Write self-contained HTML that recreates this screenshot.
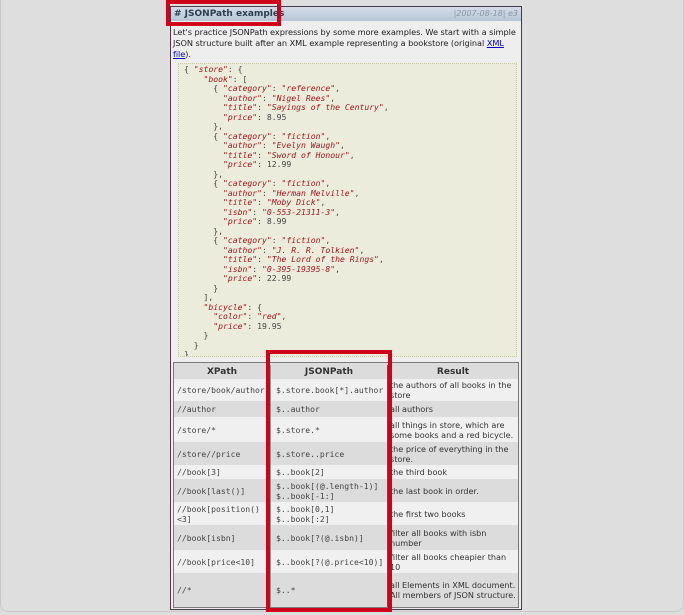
<!DOCTYPE html>
<html><head><meta charset="utf-8"><style>
*{margin:0;padding:0;box-sizing:border-box}
body{width:684px;height:615px;background:#dedede;position:relative;overflow:hidden;font-family:"DejaVu Sans","Liberation Sans",sans-serif;}
.frame{position:absolute;left:0;top:0;width:684px;height:612px;border:1px solid #c8c8c8;border-top:none;border-radius:0 0 8px 8px;background:#dedede}
.panel{position:absolute;left:170px;top:6px;width:352px;height:604px;background:#eeeeee;border:1px solid #4a3a4a;}
.hdr{position:absolute;left:0;top:0;width:350px;height:14px;background:linear-gradient(#d4dde8,#b6c6d6);font-size:9px;font-weight:bold;color:#2c3e50;line-height:14px;padding-left:3px}
.hdr span{position:absolute;right:3px;top:0;font-weight:normal;font-style:italic;color:#8a97a4;font-size:8px}
.p{position:absolute;left:2px;top:20px;width:348px;font-size:8.2px;line-height:11px;color:#222;letter-spacing:-0.05px}
.p a{color:#00c;text-decoration:underline}
.code{position:absolute;left:7px;top:56px;width:339px;height:294px;background:#ececdc;border:1px dotted #c8c8a8;font-family:"DejaVu Sans Mono","Liberation Mono",monospace;font-size:8.1px;line-height:9.5px;color:#444;padding:1px 0 0 5px;white-space:pre;overflow:hidden}
.k{color:#a3161b;font-style:italic}.s{color:#a3161b;font-style:italic}
.t{position:absolute;left:2px;top:355px;width:346px;height:246px;border:1px solid #7a7a7a;background:#dcdcdc}
.r{position:absolute;left:0;width:344px;}
.c{position:absolute;top:0;height:100%;display:flex;align-items:center;font-size:8.1px;line-height:10px;color:#333}
.m{font-family:"DejaVu Sans Mono","Liberation Mono",monospace;font-size:8.1px;color:#444}
.c1{left:0;width:97px;padding-left:3px;border-right:1px solid #999;white-space:nowrap;overflow:hidden}
.c2{left:97px;width:117px;padding-left:5px;border-right:1px solid #555;white-space:nowrap;overflow:hidden}
.c3{left:214px;width:130px;padding-left:2px;padding-right:0}
.h .c{justify-content:center;font-weight:bold;padding:0;font-size:9px}
.red{position:absolute;border:4px solid #d0021b}
</style></head><body>
<div class="frame"></div>
<div class="panel">
<div class="hdr"># JSONPath examples<span>|2007-08-18| e3</span></div>
<div class="p">Let's practice JSONPath expressions by some more examples. We start with a simple JSON structure built after an XML example representing a bookstore (original <a>XML file</a>).</div>
<div class="code">{ <span class="k">"store"</span>: {
    <span class="k">"book"</span>: [ 
      { <span class="k">"category"</span>: <span class="s">"reference"</span>,
        <span class="k">"author"</span>: <span class="s">"Nigel Rees"</span>,
        <span class="k">"title"</span>: <span class="s">"Sayings of the Century"</span>,
        <span class="k">"price"</span>: 8.95
      },
      { <span class="k">"category"</span>: <span class="s">"fiction"</span>,
        <span class="k">"author"</span>: <span class="s">"Evelyn Waugh"</span>,
        <span class="k">"title"</span>: <span class="s">"Sword of Honour"</span>,
        <span class="k">"price"</span>: 12.99
      },
      { <span class="k">"category"</span>: <span class="s">"fiction"</span>,
        <span class="k">"author"</span>: <span class="s">"Herman Melville"</span>,
        <span class="k">"title"</span>: <span class="s">"Moby Dick"</span>,
        <span class="k">"isbn"</span>: <span class="s">"0-553-21311-3"</span>,
        <span class="k">"price"</span>: 8.99
      },
      { <span class="k">"category"</span>: <span class="s">"fiction"</span>,
        <span class="k">"author"</span>: <span class="s">"J. R. R. Tolkien"</span>,
        <span class="k">"title"</span>: <span class="s">"The Lord of the Rings"</span>,
        <span class="k">"isbn"</span>: <span class="s">"0-395-19395-8"</span>,
        <span class="k">"price"</span>: 22.99
      }
    ],
    <span class="k">"bicycle"</span>: {
      <span class="k">"color"</span>: <span class="s">"red"</span>,
      <span class="k">"price"</span>: 19.95
    }
  }
}</div>
<div class="t">
<div class="r h" style="top:2px;height:14px;background:#dcdcdc"><div class="c c1">XPath</div><div class="c c2">JSONPath</div><div class="c c3">Result</div></div>
<div class="r" style="top:16px;height:22px;background:#f0f0f0"><div class="c c1 m">/store/book/author</div><div class="c c2 m">$.store.book[*].author</div><div class="c c3">the authors of all books in the store</div></div>
<div class="r" style="top:38px;height:16px;background:#dcdcdc"><div class="c c1 m">//author</div><div class="c c2 m">$..author</div><div class="c c3">all authors</div></div>
<div class="r" style="top:54px;height:25px;background:#f0f0f0"><div class="c c1 m">/store/*</div><div class="c c2 m">$.store.*</div><div class="c c3">all things in store, which are some books and a red bicycle.</div></div>
<div class="r" style="top:79px;height:23px;background:#dcdcdc"><div class="c c1 m">/store//price</div><div class="c c2 m">$.store..price</div><div class="c c3">the price of everything in the store.</div></div>
<div class="r" style="top:102px;height:14px;background:#f0f0f0"><div class="c c1 m">//book[3]</div><div class="c c2 m">$..book[2]</div><div class="c c3">the third book</div></div>
<div class="r" style="top:116px;height:23px;background:#dcdcdc"><div class="c c1 m">//book[last()]</div><div class="c c2 m">$..book[(@.length-1)]<br>$..book[-1:]</div><div class="c c3">the last book in order.</div></div>
<div class="r" style="top:139px;height:23px;background:#f0f0f0"><div class="c c1 m">//book[position()<br>&lt;3]</div><div class="c c2 m">$..book[0,1]<br>$..book[:2]</div><div class="c c3">the first two books</div></div>
<div class="r" style="top:162px;height:25px;background:#dcdcdc"><div class="c c1 m">//book[isbn]</div><div class="c c2 m">$..book[?(@.isbn)]</div><div class="c c3">filter all books with isbn number</div></div>
<div class="r" style="top:187px;height:23px;background:#f0f0f0"><div class="c c1 m">//book[price&lt;10]</div><div class="c c2 m">$..book[?(@.price&lt;10)]</div><div class="c c3">filter all books cheapier than 10</div></div>
<div class="r" style="top:210px;height:34px;background:#dcdcdc"><div class="c c1 m">//*</div><div class="c c2 m">$..*</div><div class="c c3">all Elements in XML document. All members of JSON structure.</div></div>
</div>
</div>
<div class="red" style="left:166px;top:0;width:115px;height:26px"></div>
<div class="red" style="left:266px;top:350px;width:126px;height:262px"></div>
</body></html>
